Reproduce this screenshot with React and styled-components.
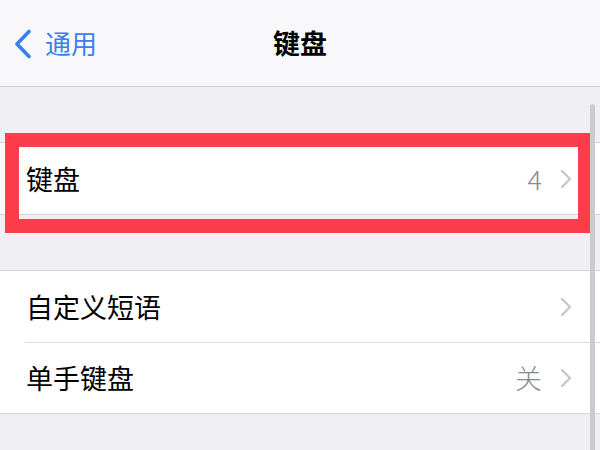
import React from 'react'
import styled, { createGlobalStyle } from 'styled-components'

const Global = createGlobalStyle`
    html, body {
        margin: 0;
        padding: 0;
        background: #efeff4;
    }
    body {
        font-family: "Noto Sans CJK SC", "Noto Sans", sans-serif;
        -webkit-font-smoothing: antialiased;
    }
`

const Chevron = () => (
    <svg width="12" height="20" viewBox="0 0 12 20">
        <path d="M2 2 L10 10 L2 18" fill="none" stroke="#c7c7cc" strokeWidth="2.4" strokeLinecap="round" strokeLinejoin="round" />
    </svg>
)

const BackChevron = () => (
    <svg width="20" height="30" viewBox="0 0 20 30">
        <path d="M16 2.5 L4 15 L16 27.5" fill="none" stroke="#3a7ff0" strokeWidth="3.6" strokeLinecap="round" strokeLinejoin="round" />
    </svg>
)

const Row = ({ label, value, last }) => (
    <Item>
        <Label>{label}</Label>
        <Right>
            {value && <Value>{value}</Value>}
            <Chevron />
        </Right>
        {!last && <Divider />}
    </Item>
)

const App = () => {
    return (
        <>
            <Global />
            <Screen>
                <NavBar>
                    <Back>
                        <BackChevron />
                        <span>通用</span>
                    </Back>
                    <Title>键盘</Title>
                </NavBar>

                <Content>
                    <Group>
                        <Row label="键盘" value="4" last />
                    </Group>

                    <Group>
                        <Row label="自定义短语" />
                        <Row label="单手键盘" value="关" last />
                    </Group>
                </Content>

                <Highlight />
                <ScrollBar />
            </Screen>
        </>
    )
}

const Screen = styled.div`
    position: relative;
    width: 600px;
    height: 450px;
    overflow: hidden;
    background: #efeff4;
    display: flex;
    flex-direction: column;
`
const NavBar = styled.div`
    position: relative;
    height: 86px;
    flex-shrink: 0;
    background: #f8f8fa;
    border-bottom: 1px solid #cfcfd3;
    display: flex;
    align-items: center;
    justify-content: center;
`
const Back = styled.div`
    position: absolute;
    left: 13px;
    top: 0;
    bottom: 0;
    display: flex;
    align-items: center;
    gap: 12px;
    color: #3a7ff0;
    font-size: 26px;
    padding-bottom: 2px;
    svg {
        margin-top: 4px;
    }
`
const Title = styled.div`
    font-size: 27px;
    font-weight: 700;
    color: #000;
    padding-bottom: 2px;
`
const Content = styled.div`
    display: flex;
    flex-direction: column;
    gap: 55px;
    padding-top: 55px;
`
const Group = styled.div`
    background: #fff;
    border-top: 1px solid #d6d6da;
    border-bottom: 1px solid #d6d6da;
`
const Item = styled.div`
    position: relative;
    height: 71px;
    display: flex;
    align-items: center;
    justify-content: space-between;
    padding: 0 28px 0 26px;
`
const Label = styled.div`
    font-size: 27px;
    color: #000;
`
const Right = styled.div`
    display: flex;
    align-items: center;
    gap: 18px;
`
const Value = styled.div`
    font-size: 27px;
    color: #8a8a8e;
    font-family: "Noto Sans CJK SC", "Noto Sans", sans-serif;
    font-weight: 300;
`
const Divider = styled.div`
    position: absolute;
    left: 25px;
    right: 0;
    bottom: -1px;
    height: 1px;
    background: #dcdce0;
`
const Highlight = styled.div`
    position: absolute;
    left: 5px;
    top: 133px;
    width: 586px;
    height: 100px;
    box-sizing: border-box;
    border: 14px solid #fc3d4c;
    border-right-width: 13px;
`
const ScrollBar = styled.div`
    position: absolute;
    left: 590px;
    top: 104px;
    width: 5px;
    height: 360px;
    border-radius: 3px;
    background: #cbcbcf;
`

export default App
